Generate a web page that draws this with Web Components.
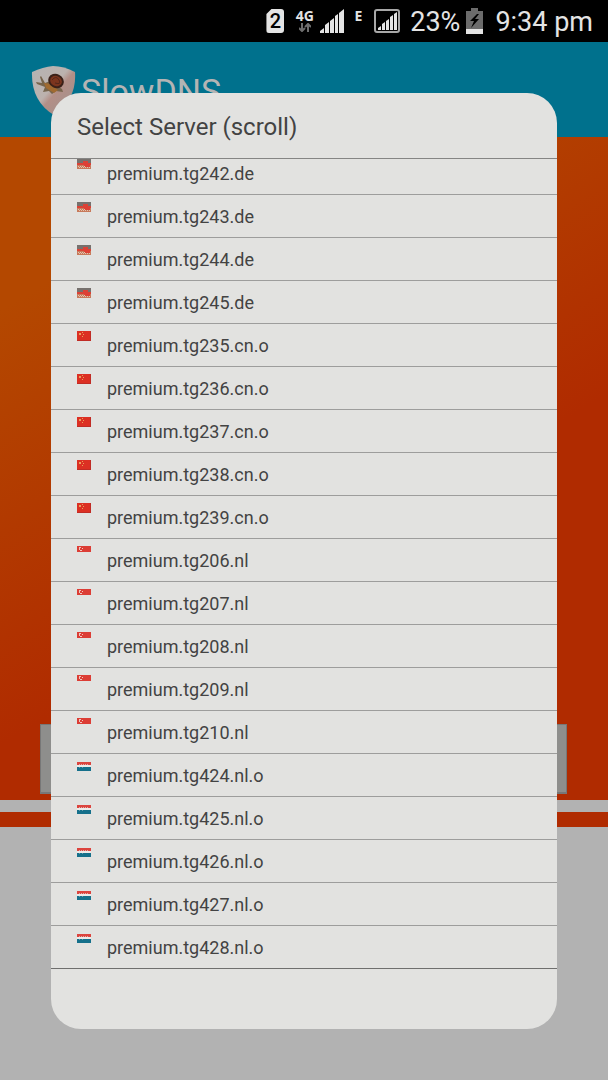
<!DOCTYPE html>
<html lang="en">
<head>
<meta charset="utf-8">
<meta name="viewport" content="width=device-width, initial-scale=1">
<title>SlowDNS</title>
<style>
    html, body {
        height: 100%;
    }

    body {
        margin: 0;
        font-family: Roboto, "Liberation Sans", sans-serif;
        background-color: #b2b2b2;
        overflow: hidden;
    }
</style>
</head>
<body>
<slow-dns-app></slow-dns-app>

<script>
class StatusBar extends HTMLElement {
    constructor() {
        super();
        this.shadowDOM = this.attachShadow({mode: "open"});
    }

    connectedCallback() {
        this.render();
    }

    render() {
        this.shadowDOM.innerHTML = `
        <style>
        :host {
            display: flex;
            align-items: center;
            justify-content: flex-end;
            height: 42px;
            padding-right: 15px;
            box-sizing: border-box;
            background-color: #000;
            color: #e4e4e4;
            font-size: 27px;
            line-height: 40px;
        }

        svg {
            display: block;
            flex: none;
        }

        .sim {
            width: 18px;
            height: 24px;
            margin-right: 11px;
            box-sizing: border-box;
            border-radius: 3px;
            background-color: #e4e4e4;
            clip-path: polygon(5px 0, 100% 0, 100% 100%, 0 100%, 0 5px);
            color: #000;
            font-size: 20px;
            font-weight: 500;
            line-height: 24px;
            text-align: center;
        }

        .network {
            display: flex;
            flex-direction: column;
            align-items: center;
            width: 19px;
            height: 24px;
            margin-right: 6px;
            font: bold 14px/14px "Noto Sans", sans-serif;
        }

        .edge {
            height: 24px;
            margin: 0 12px 0 10px;
            font: bold 14px/14px "Noto Sans", sans-serif;
        }

        .level, time {
            padding-top: 2px;
        }

        .level {
            margin: 0 6px 0 10px;
        }

        .battery {
            margin-right: 12px;
        }
        </style>

        <span class="sim">2</span>
        <span class="network">4G
            <svg width="12" height="9" viewBox="0 0 12 9" fill="none" stroke="#6e6e6e" stroke-width="2">
                <path d="M3 0v7M0 5l3 3 3-3M9 9V2M6 4l3-3 3 3"/>
            </svg>
        </span>
        <svg width="24" height="24" viewBox="0 0 24 24" fill="#e4e4e4">
            <path d="M0 24v-2l4-3v5zM5 24v-8l4-3v11zM10 24V12l4-3v15zM15 24V7l3-2v19zM19 24V4l5-4v24z"/>
        </svg>
        <span class="edge">E</span>
        <svg width="26" height="24" viewBox="0 0 26 24">
            <rect x="1" y="1" width="24" height="22" rx="2" fill="none" stroke="#a8a8a8" stroke-width="2"/>
            <path fill="#e4e4e4" d="M4 21v-2l3-2v4zM8 21v-6l3-2v8zM12 21v-9l3-2v11zM16 21V8l3-2v15zM20 21V5l3-2v18z"/>
        </svg>
        <span class="level">23%</span>
        <svg class="battery" width="17" height="26" viewBox="0 0 17 26">
            <path fill="#6c6c6c" d="M5 0h7v3h5v18H0V3h5z"/>
            <path fill="#e4e4e4" d="M0 21h17v5H0z"/>
            <path fill="#000" d="M11 6L4 13h4l-3 7 8-9H9l4-5z"/>
        </svg>
        <time>9:34 pm</time>
        `;
    }
}

customElements.define("status-bar", StatusBar);

class AppHeader extends HTMLElement {
    constructor() {
        super();
        this.shadowDOM = this.attachShadow({mode: "open"});
    }

    connectedCallback() {
        this.render();
    }

    render() {
        this.shadowDOM.innerHTML = `
        <style>
        :host {
            display: flex;
            align-items: center;
            gap: 5px;
            height: 95px;
            padding-left: 31px;
            background-color: #00718d;
            color: #b4b4b4;
        }

        h1 {
            margin: 0;
            padding-top: 2px;
            font-size: 34px;
            font-weight: 400;
            line-height: 40px;
        }
        </style>

        <svg width="45" height="50" viewBox="0 0 45 50">
            <defs>
                <linearGradient id="shield" x1="0" y1="0" x2="1" y2="1">
                    <stop offset="0" stop-color="#b5b3b3"/>
                    <stop offset=".45" stop-color="#bcb2ae"/>
                    <stop offset=".55" stop-color="#b38f87"/>
                    <stop offset="1" stop-color="#9d918e"/>
                </linearGradient>
            </defs>
            <path fill="url(#shield)" d="M1 7Q12 2 22 1Q33 1 44 7Q46 34 23 50Q0 36 1 7z"/>
            <path fill="#76644c" d="M5 17l6 1-2-6 1-1 4 7 5-2 12 8 1 3-7-1-4 3-3-3-6 1 2-5-8-3z"/>
            <path fill="#a06a30" d="M13 18l7 1 7 6-4 3-8-5z"/>
            <ellipse cx="25" cy="16" rx="8" ry="7" fill="#3b2119" transform="rotate(25 25 16)"/>
            <ellipse cx="25" cy="16" rx="6" ry="5" fill="#7c351e" transform="rotate(25 25 16)"/>
            <path fill="none" stroke="#51271b" d="M21 15q4-5 7 0t-4 3"/>
        </svg>
        <h1><slot></slot></h1>
        `;
    }
}

customElements.define("app-header", AppHeader);

class CountryFlag extends HTMLElement {
    constructor() {
        super();
        this.shadowDOM = this.attachShadow({mode: "open"});
    }

    connectedCallback() {
        this.render();
    }

    render() {
        const flags = {
            de: `<path fill="#77716e" d="M0 0h14v4H0z"/>
                <path fill="#dc4136" d="M0 4h14v2H0zM6 2h5v2H6z"/>
                <path fill="#c87a5b" d="M0 6h14v4H0z"/>
                <path fill="#de4035" d="M7 5h6v3H7z"/>
                <path stroke="#e3c3ae" stroke-dasharray="1 1" d="M1 7.5h7M2 8.5h11"/>`,
            cn: `<path fill="#dc3023" d="M0 0h14v10H0z"/>
                <path fill="#c02c25" d="M0 9h14v1H0zM13 0h1v10h-1z"/>
                <path fill="#e9a05a" d="M2 2h2v2H2zM5 1h1v1H5zM6 3h1v1H6zM5 5h1v1H5z"/>`,
            sg: `<path fill="#dc3d35" d="M0 0h14v6H0z"/>
                <path fill="#efc5bc" d="M2 1h1v3H2zM3 1h1v1H3zM3 4h2v1H3zM5 2h1v1H5z"/>`,
            nl: `<path fill="#dc443e" d="M0 1h14v3H0z"/>
                <path fill="#eceae8" d="M0 4h14v2H0z"/>
                <path fill="#15708b" d="M0 6h14v4H0z"/>
                <path stroke="#e2aaa5" stroke-dasharray="1 1" d="M2 3.5h10"/>
                <path stroke="#6a9dab" stroke-dasharray="1 2" d="M2 6.5h6"/>`
        };

        this.shadowDOM.innerHTML = `
        <style>
        :host {
            display: block;
            flex: none;
            width: 14px;
            height: 10px;
        }

        svg {
            display: block;
        }
        </style>

        <svg width="14" height="10" viewBox="0 0 14 10">${flags[this.getAttribute("code")]}</svg>
        `;
    }
}

customElements.define("country-flag", CountryFlag);

class ServerItem extends HTMLElement {
    constructor() {
        super();
        this.shadowDOM = this.attachShadow({mode: "open"});
    }

    set server(server) {
        this._server = server;
        this.render();
    }

    render() {
        this.shadowDOM.innerHTML = `
        <style>
        :host {
            display: block;
            border-bottom: 1px solid #9d9d9c;
        }

        button {
            display: flex;
            align-items: flex-start;
            gap: 16px;
            width: 100%;
            height: 42px;
            padding: 7px 26px;
            border: 0;
            background: none;
            color: #434343;
            font: inherit;
            font-size: 18px;
            line-height: 30px;
            text-align: left;
        }
        </style>

        <button type="button">
            <country-flag code="${this._server.flag}"></country-flag>
            <span>${this._server.name}</span>
        </button>
        `;
    }
}

customElements.define("server-item", ServerItem);

class ServerDialog extends HTMLElement {
    constructor() {
        super();
        this.shadowDOM = this.attachShadow({mode: "open"});
    }

    set servers(servers) {
        this._servers = servers;
        this.render();
    }

    render() {
        this.shadowDOM.innerHTML = `
        <style>
        :host {
            display: block;
            padding-bottom: 60px;
            border-radius: 30px;
            background-color: #e2e2e0;
            color: #434343;
            overflow: hidden;
        }

        h2 {
            margin: 0;
            padding: 18px 26px 15px;
            border-bottom: 1px solid #858584;
            font-size: 24px;
            font-weight: 400;
            line-height: 32px;
        }

        .list {
            overflow: hidden;
            border-bottom: 1px solid #6f6f6e;
        }

        /* the list is scrolled a little past the top of its first row */
        server-item:first-child {
            margin-top: -7px;
        }

        server-item:last-child {
            margin-bottom: -1px;
        }
        </style>

        <h2>Select Server (scroll)</h2>
        <div class="list"></div>
        `;

        const list = this.shadowDOM.querySelector(".list");
        this._servers.forEach(server => {
            const item = document.createElement("server-item");
            item.server = server;
            list.appendChild(item);
        });
    }
}

customElements.define("server-dialog", ServerDialog);

class SlowDnsApp extends HTMLElement {
    constructor() {
        super();
        this.shadowDOM = this.attachShadow({mode: "open"});
    }

    connectedCallback() {
        this.render();
    }

    render() {
        this.shadowDOM.innerHTML = `
        <style>
        :host {
            display: block;
            position: relative;
            min-height: 100%;
        }

        main {
            display: flex;
            flex-direction: column;
            justify-content: flex-end;
            height: 663px;
            padding: 0 41px 6px 40px;
            box-sizing: border-box;
            background: linear-gradient(150deg, #b44800 17%, #b02b00 60%);
        }

        .connect {
            height: 70px;
            border: 1px solid #777;
            border-bottom-width: 2px;
            background-color: #8e8e8c;
        }

        .strip {
            height: 12px;
            background-color: #b2b2b2;
            border-bottom: 15px solid #b02b00;
        }

        server-dialog {
            position: absolute;
            top: 93px;
            left: 51px;
            right: 51px;
        }
        </style>

        <status-bar></status-bar>
        <app-header>SlowDNS</app-header>
        <main>
            <button class="connect" type="button" aria-label="Connect"></button>
        </main>
        <div class="strip"></div>
        <server-dialog role="dialog" aria-label="Select Server"></server-dialog>
        `;

        const names = (numbers, flag, suffix) =>
            numbers.map(number => ({flag: flag, name: `premium.tg${number}.${suffix}`}));

        this.shadowDOM.querySelector("server-dialog").servers = [
            ...names([242, 243, 244, 245], "de", "de"),
            ...names([235, 236, 237, 238, 239], "cn", "cn.o"),
            ...names([206, 207, 208, 209, 210], "sg", "nl"),
            ...names([424, 425, 426, 427, 428], "nl", "nl.o")
        ];
    }
}

customElements.define("slow-dns-app", SlowDnsApp);
</script>
</body>
</html>
